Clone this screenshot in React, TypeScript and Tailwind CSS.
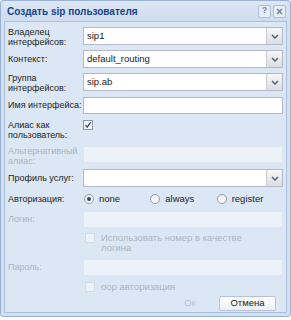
const Arrow = () => (
  <svg width="8" height="5" viewBox="0 0 8 5">
    <path d="M1 1 L4 4 L7 1" stroke="#4b5d78" strokeWidth="1.4" fill="none" />
  </svg>
);

const Combo = ({ value }: { value: string }) => (
  <div className="flex h-[18px] flex-1 border border-[#b5b8c8] bg-white">
    <div className="flex-1 pl-[3px] leading-[16px] text-[#222]">{value}</div>
    <div className="flex w-[16px] items-center justify-center border-l border-[#c9cdd6] bg-gradient-to-b from-[#f7f7f7] to-[#dcdde0]">
      <Arrow />
    </div>
  </div>
);

const Field = ({ disabled }: { disabled?: boolean }) => (
  <div
    className={
      disabled
        ? "h-[17px] flex-1 border border-[#dde5ef] bg-[#edf2f9]"
        : "h-[17px] flex-1 border border-[#b5b8c8] bg-white"
    }
  />
);

const Check = ({ on, disabled }: { on?: boolean; disabled?: boolean }) => (
  <div
    className={
      disabled
        ? "h-[10px] w-[10px] shrink-0 border border-[#d3dae4] bg-[#eef2f8]"
        : "flex h-[10px] w-[10px] shrink-0 items-center justify-center border border-[#8a97ab] bg-[#f4f6f9]"
    }
  >
    {on && (
      <svg width="8" height="8" viewBox="0 0 8 8">
        <path d="M1.5 4 L3.2 6.2 L6.8 1" stroke="#2b3f63" strokeWidth="1.2" fill="none" />
      </svg>
    )}
  </div>
);

const Radio = ({ on, label }: { on?: boolean; label: string }) => (
  <div className="flex items-center gap-[5px]">
    <div className="flex h-[10px] w-[10px] items-center justify-center rounded-full border border-[#8d9aae] bg-gradient-to-b from-[#e9edf2] to-white">
      {on && <div className="h-[4px] w-[4px] rounded-full bg-[#2c4a78]" />}
    </div>
    <span className="text-[#222]">{label}</span>
  </div>
);

const Label = ({ children, dim }: { children: React.ReactNode; dim?: boolean }) => (
  <div
    className={`w-[75px] shrink-0 whitespace-nowrap text-[9px] leading-[10px] ${dim ? "text-[#aab3bf]" : "text-[#222]"}`}
  >
    {children}
  </div>
);

export default function App() {
  return (
    <div
      className="h-[320px] w-[291px] bg-white text-[9.5px]"
      style={{ fontFamily: '"Liberation Sans", Arial, sans-serif' }}
    >
      <div className="flex h-[317px] flex-col rounded-[3px] border border-[#99b2d3] bg-[#d3e0f0] px-[3px]">
        {/* заголовок */}
        <div className="flex h-[20px] shrink-0 items-center justify-between bg-gradient-to-b from-[#dde8f5] to-[#cfdcee] pl-[3px] pr-[1px]">
          <span className="text-[10px] font-bold text-[#15428b]">Создать sip пользователя</span>
          <div className="flex gap-[2px]">
            <div className="flex h-[13px] w-[13px] items-center justify-center rounded-[2px] border border-[#a9bcd8] bg-[#e6eef8] text-[9px] font-bold text-[#6d84a8]">?</div>
            <div className="flex h-[13px] w-[13px] items-center justify-center rounded-[2px] border border-[#a9bcd8] bg-[#e6eef8]">
              <svg width="7" height="7" viewBox="0 0 7 7">
                <path d="M1 1 L6 6 M6 1 L1 6" stroke="#6d84a8" strokeWidth="1.5" />
              </svg>
            </div>
          </div>
        </div>

        <div className="flex flex-1 flex-col border border-[#a9bfdc] bg-[#dce7f5] pl-[3px] pr-[3px] pt-[5px]">
          <div className="flex h-[20px] items-start">
            <Label>Владелец<br />интерфейсов:</Label>
            <Combo value="sip1" />
          </div>
          <div className="mt-[3px] flex h-[18px] items-center">
            <Label>Контекст:</Label>
            <Combo value="default_routing" />
          </div>
          <div className="mt-[5px] flex h-[18px] items-start">
            <Label>Группа<br />интерфейсов:</Label>
            <Combo value="sip.ab" />
          </div>
          <div className="mt-[5px] flex h-[18px] items-center">
            <Label>Имя интерфейса:</Label>
            <Field />
          </div>
          <div className="mt-[6px] flex h-[21px] items-start">
            <Label>Алиас как<br />пользователь:</Label>
            <Check on />
          </div>
          <div className="mt-[5px] flex h-[18px] items-start">
            <Label dim>Альтернативный<br />алиас:</Label>
            <Field disabled />
          </div>
          <div className="mt-[5px] flex h-[18px] items-center">
            <Label>Профиль услуг:</Label>
            <Combo value="" />
          </div>
          <div className="mt-[6px] flex h-[12px] items-center">
            <Label>Авторизация:</Label>
            <div className="grid flex-1 grid-cols-3 pl-[1px]">
              <Radio on label="none" />
              <Radio label="always" />
              <Radio label="register" />
            </div>
          </div>
          <div className="mt-[5px] flex h-[18px] items-center">
            <Label dim>Логин:</Label>
            <Field disabled />
          </div>
          <div className="mt-[5px] flex h-[22px] items-start">
            <div className="w-[77px] shrink-0" />
            <Check disabled />
            <div className="ml-[6px] leading-[10px] text-[#aab3bf]">Использовать номер в качестве<br />логина</div>
          </div>
          <div className="mt-[3px] flex h-[18px] items-center">
            <Label dim>Пароль:</Label>
            <Field disabled />
          </div>
          <div className="mt-[5px] flex h-[12px] items-center">
            <div className="w-[77px] shrink-0" />
            <Check disabled />
            <div className="ml-[6px] text-[#aab3bf]">oop авторизация</div>
          </div>
          <div className="mt-[3px] flex items-center justify-end gap-[2px] pr-[7px]">
            <div className="flex h-[15px] w-[54px] items-center justify-center text-[#b9c2ce]">Ок</div>
            <div className="flex h-[15px] w-[57px] items-center justify-center rounded-[2px] border border-[#b7c2d2] bg-gradient-to-b from-white to-[#eceff3] text-[#222]">Отмена</div>
          </div>
        </div>
        <div className="h-[3px] shrink-0" />
      </div>
    </div>
  );
}
